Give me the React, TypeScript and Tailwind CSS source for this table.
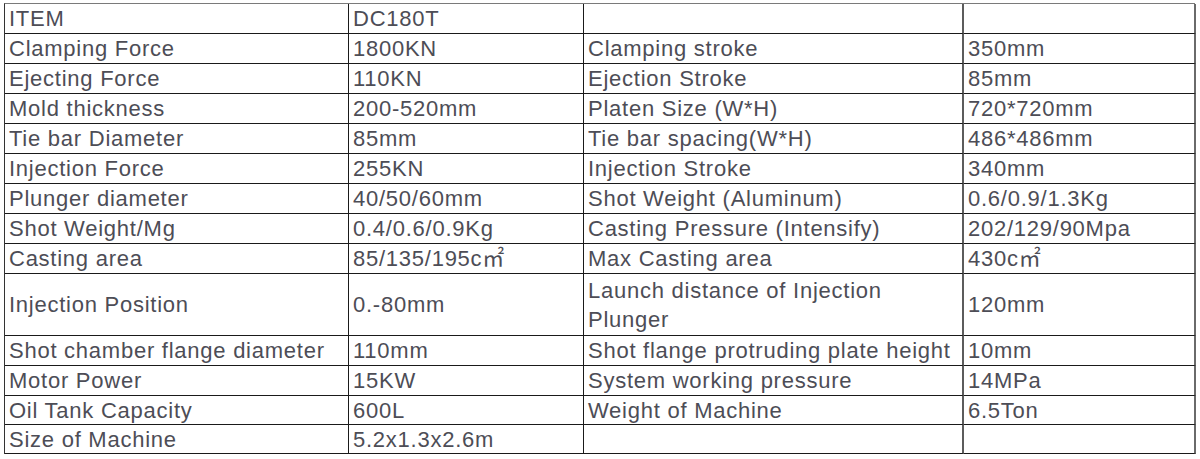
import React from "react";

type Row = { cells: [string, string, string, string]; h: string };

const rows: Row[] = [
  { cells: ["ITEM", "DC180T", "", ""], h: "h-[30px]" },
  { cells: ["Clamping Force", "1800KN", "Clamping stroke", "350mm"], h: "h-[30px]" },
  { cells: ["Ejecting Force", "110KN", "Ejection Stroke", "85mm"], h: "h-[30px]" },
  { cells: ["Mold thickness", "200-520mm", "Platen Size (W*H)", "720*720mm"], h: "h-[30px]" },
  { cells: ["Tie bar Diameter", "85mm", "Tie bar spacing(W*H)", "486*486mm"], h: "h-[30px]" },
  { cells: ["Injection Force", "255KN", "Injection Stroke", "340mm"], h: "h-[30px]" },
  { cells: ["Plunger diameter", "40/50/60mm", "Shot Weight (Aluminum)", "0.6/0.9/1.3Kg"], h: "h-[30px]" },
  { cells: ["Shot Weight/Mg", "0.4/0.6/0.9Kg", "Casting Pressure (Intensify)", "202/129/90Mpa"], h: "h-[30px]" },
  { cells: ["Casting area", "85/135/195c㎡", "Max Casting area", "430c㎡"], h: "h-[30px]" },
  {
    cells: ["Injection Position", "0.-80mm", "Launch distance of Injection Plunger", "120mm"],
    h: "h-[62px]",
  },
  { cells: ["Shot chamber flange diameter", "110mm", "Shot flange protruding plate height", "10mm"], h: "h-[30px]" },
  { cells: ["Motor Power", "15KW", "System working pressure", "14MPa"], h: "h-[30px]" },
  { cells: ["Oil Tank Capacity", "600L", "Weight of Machine", "6.5Ton"], h: "h-[29px]" },
  { cells: ["Size of Machine", "5.2x1.3x2.6m", "", ""], h: "h-[29px]" },
];

// per-column right border style, written out in full
const colBorder = [
  "border-r border-r-[#1a1a1a]",
  "border-r border-r-[#1a1a1a]",
  "border-r-2 border-r-[#5c5c5c]",
  "border-r-2 border-r-[#6a6a6a]",
];

export default function App() {
  return (
    <div className="w-[1200px] h-[459px] bg-white pl-[4px] pt-[3px] font-['Liberation_Sans','Noto_Sans_CJK_SC',sans-serif] text-[22px] tracking-[0.75px] text-[#4d4d56]">
      <div className="grid w-[1191px] grid-cols-[344px_235px_380px_232px] border-l border-t border-l-[#333] border-t-[#7a7a7a]">
        {rows.map((row, ri) =>
          row.cells.map((text, ci) => (
            <div
              key={`${ri}-${ci}`}
              className={`${colBorder[ci]} ${row.h} border-b border-b-[#1a1a1a] pl-[4px] pt-[1px] leading-[30px] whitespace-nowrap flex items-center`}
            >
              {text === "Launch distance of Injection Plunger" ? (
                <div className="leading-[29px] whitespace-normal">
                  Launch distance of Injection
                  <br />
                  Plunger
                </div>
              ) : (
                text
              )}
            </div>
          ))
        )}
      </div>
    </div>
  );
}
